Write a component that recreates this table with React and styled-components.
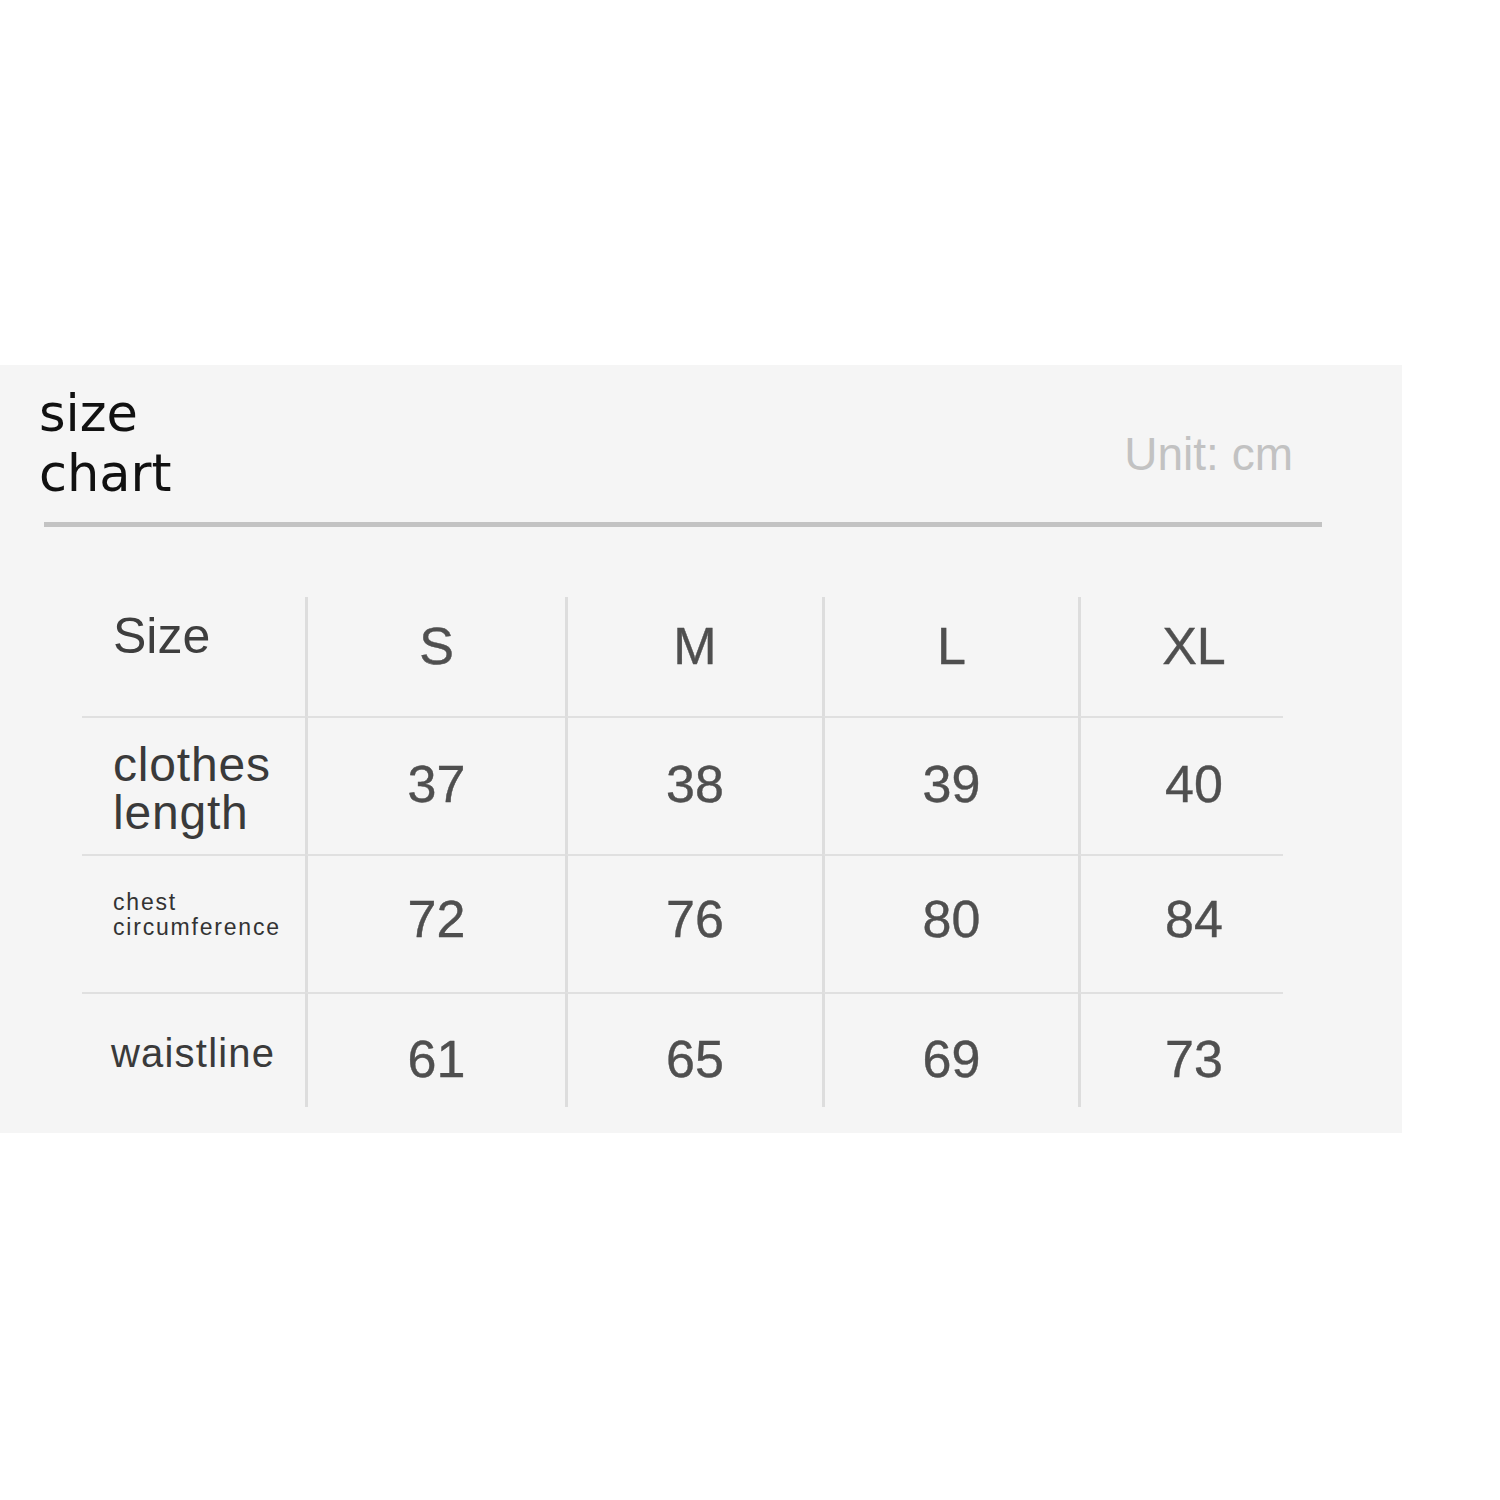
import React from "react";
import styled, { createGlobalStyle } from "styled-components";

const Global = createGlobalStyle`
  html, body { margin: 0; padding: 0; background: #ffffff; }
  body { font-family: "Liberation Sans", Arial, sans-serif; }
`;

const Page = styled.div`
  padding-top: 365px;
  width: 1500px;
  height: 1500px;
  box-sizing: border-box;
`;

const Panel = styled.section`
  width: 1402px;
  height: 768px;
  box-sizing: border-box;
  background: #f5f5f5;
  padding-top: 19px;
  display: flex;
  flex-direction: column;
`;

const Header = styled.header`
  margin-left: 44px;
  width: 1278px;
  box-sizing: border-box;
  padding-bottom: 18px;
  border-bottom: 5px solid #c3c3c3;
  display: flex;
  justify-content: space-between;
  align-items: flex-start;
`;

const Title = styled.h1`
  margin: 0 0 0 -5px;
  font-family: "DejaVu Sans", "Liberation Sans", sans-serif;
  font-weight: 400;
  font-size: 51px;
  line-height: 60px;
  color: #111;
  width: 200px;
`;

const Unit = styled.span`
  margin-top: 47px;
  margin-right: 29px;
  font-size: 46px;
  line-height: 1;
  color: #c2c2c2;
`;

const Table = styled.div`
  margin-top: 70px;
  margin-left: 82px;
  display: grid;
  grid-template-columns: 223px 260px 257px 256px 205px;
  grid-template-rows: 119px 138px 138px 115px;
`;

const Cell = styled.div`
  box-sizing: border-box;
  display: flex;
  justify-content: ${(p) => (p.$label ? "flex-start" : "center")};
  align-items: flex-start;
  padding-top: ${(p) => p.$pt}px;
  padding-left: ${(p) => (p.$label ? 31 : p.$last ? 24 : 0)}px;
  border-top: ${(p) => (p.$firstRow ? "none" : "2px solid #e0e0e0")};
  border-left: ${(p) => (p.$label ? "none" : "3px solid #dddddd")};
`;

const Value = styled.span`
  font-size: 52px;
  line-height: 1;
  color: #4f4f4f;
  -webkit-text-stroke: 0.4px #4f4f4f;
`;

const LabelText = styled.span`
  color: ${(p) => p.$color || "#383838"};
  font-size: ${(p) => p.$size}px;
  line-height: ${(p) => p.$lh}px;
  letter-spacing: ${(p) => p.$ls || 0}px;
  margin-left: ${(p) => p.$ml || 0}px;
`;

const sizes = ["S", "M", "L", "XL"];

const rows = [
  {
    label: ["clothes", "length"],
    labelStyle: { $size: 48, $lh: 48, $ls: 0.8, $color: "#3a3a3a" },
    labelPt: 23,
    valuePt: 40,
    values: ["37", "38", "39", "40"],
  },
  {
    label: ["chest", "circumference"],
    labelStyle: { $size: 23, $lh: 25, $ls: 1.8, $color: "#333" },
    labelPt: 34,
    valuePt: 37,
    values: ["72", "76", "80", "84"],
  },
  {
    label: ["waistline"],
    labelStyle: { $size: 40, $lh: 40, $ls: 1.2, $color: "#3a3a3a", $ml: -2 },
    labelPt: 39,
    valuePt: 39,
    values: ["61", "65", "69", "73"],
  },
];

export default function App() {
  return (
    <>
      <Global />
      <Page>
        <Panel>
          <Header>
            <Title>
              size
              <br />
              chart
            </Title>
            <Unit>Unit: cm</Unit>
          </Header>
          <Table>
            <Cell $label $firstRow $pt={14}>
              <LabelText $size={50} $lh={50} $color="#3e3e3e">
                Size
              </LabelText>
            </Cell>
            {sizes.map((s, i) => (
              <Cell key={s} $firstRow $pt={23} $last={i === 3}>
                <Value>{s}</Value>
              </Cell>
            ))}
            {rows.map((r) => (
              <React.Fragment key={r.label.join(" ")}>
                <Cell $label $pt={r.labelPt}>
                  <LabelText {...r.labelStyle}>
                    {r.label.map((l, i) => (
                      <React.Fragment key={l}>
                        {i > 0 && <br />}
                        {l}
                      </React.Fragment>
                    ))}
                  </LabelText>
                </Cell>
                {r.values.map((v, i) => (
                  <Cell key={i} $pt={r.valuePt} $last={i === 3}>
                    <Value>{v}</Value>
                  </Cell>
                ))}
              </React.Fragment>
            ))}
          </Table>
        </Panel>
      </Page>
    </>
  );
}
